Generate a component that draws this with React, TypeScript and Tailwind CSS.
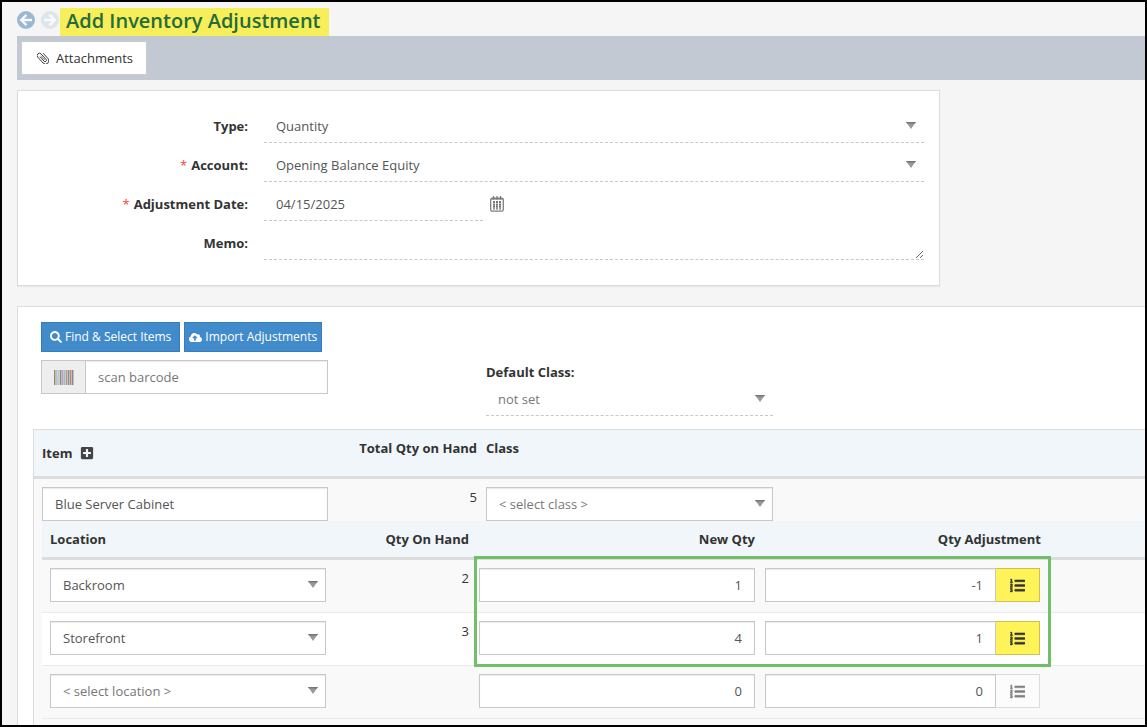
import React, { useState } from 'react';
import { FaCloudUploadAlt, FaListOl, FaPlusSquare, FaSearch } from 'react-icons/fa';

const fieldClass =
  'h-[34px] w-full appearance-none rounded-none border border-[#c8c8c8] bg-white px-3 text-[#555] shadow-[inset_0_1px_1px_rgba(0,0,0,0.08)] outline-none';
const lineClass =
  'block h-[34px] w-full appearance-none rounded-none border-b border-dashed border-[#c8c8c8] bg-transparent px-3 text-[#555] outline-none';

interface LocationRow {
  location: string;
  onHand: string;
  newQty: string;
  adjustment: string;
}

const initialRows: LocationRow[] = [
  { location: 'Backroom', onHand: '2', newQty: '1', adjustment: '-1' },
  { location: 'Storefront', onHand: '3', newQty: '4', adjustment: '1' },
  { location: '', onHand: '', newQty: '0', adjustment: '0' },
];

const CircleArrow: React.FC<{ forward?: boolean }> = ({ forward }) => (
  <svg viewBox="0 0 18 18" className="size-[18px]" aria-hidden="true">
    <circle cx="9" cy="9" r="9" fill={forward ? '#dfe6eb' : '#9bb8d3'} />
    <g transform={forward ? 'rotate(180 9 9)' : undefined} fill="none" stroke="#f8fafc" strokeWidth="2.4">
      <path d="M9.4 3.8 4.3 9l5.1 5.2" />
      <path d="M4.6 9H15" />
    </g>
  </svg>
);

const PaperclipIcon = () => (
  <svg viewBox="0 0 12 12" className="size-3" fill="none" stroke="#333" strokeWidth="0.9" aria-hidden="true">
    <g transform="rotate(-42 6 6)">
      <path d="M4.700 3v6.200a1.300 1.300 0 0 0 2.600 0V1.800a2.300 2.300 0 0 0-4.600 0v8a3.300 3.300 0 0 0 6.600 0V2.600" />
      <path d="M6 3v6" strokeWidth="0.500" />
    </g>
  </svg>
);

const CalendarIcon = () => (
  <svg viewBox="0 0 14 16" className="h-4 w-3.5" aria-hidden="true">
    <rect x="0.7" y="2.200" width="12.600" height="13" rx="1.600" fill="#fff" stroke="#808080" strokeWidth="1.300" />
    <path d="M1 2.800h12" stroke="#808080" strokeWidth="1.600" />
    <path d="M3.500 0v3.500M7 0v3.500M10.500 0v3.500" stroke="#777" strokeWidth="1.200" />
    <path d="M4 5v8.600M7 5v8.600M10 5v8.600" stroke="#777" strokeWidth="2" strokeDasharray="2 0.400" />
  </svg>
);

const barcodeBars = ['#8f8a72', '#c3b5dd', '#a9d6b8', '#8e8890', '#b79fd0', '#8fc5c4', '#c2908f', '#8f8f86', '#b08a72', '#8a86a0'];

const BarcodeIcon = () => (
  <svg viewBox="0 0 20 15" className="h-[15px] w-5" aria-hidden="true">
    <rect width="20" height="15" fill="#d9d4cc" />
    {barcodeBars.map((color, i) => (
      <rect key={color} x={i * 2} width="1.300" height="15" fill={color} />
    ))}
  </svg>
);

interface SelectProps {
  id?: string;
  label?: string;
  options: string[];
  className: string;
}

const Select: React.FC<SelectProps> = ({ id, label, options, className }) => (
  <div className="relative w-full">
    <select id={id} aria-label={label} className={className}>
      {options.map((option) => (
        <option key={option}>{option}</option>
      ))}
    </select>
    <svg
      viewBox="0 0 10 7"
      className="pointer-events-none absolute right-2 top-[13px] h-[7px] w-2.5"
      aria-hidden="true"
    >
      <path d="M0 0h10L5 7z" fill="#999" />
      <path d="M0 0h10L9 1.500H1z" fill="#777" />
    </svg>
  </div>
);

interface FormRowProps {
  id: string;
  label: string;
  required?: boolean;
  children: React.ReactNode;
}

const FormRow: React.FC<FormRowProps> = ({ id, label, required, children }) => (
  <div className="flex items-center gap-4">
    <label htmlFor={id} className="w-[230px] shrink-0 text-right font-bold text-[#333]">
      {required && <span className="mr-1 font-normal text-[#f44336]">*</span>}
      {label}
    </label>
    <div className="flex flex-1 items-center">{children}</div>
  </div>
);

const LocationTable = () => {
  const [rows, setRows] = useState(initialRows);

  const update = (index: number, key: 'newQty' | 'adjustment', value: string) => {
    setRows(rows.map((row, i) => (i === index ? { ...row, [key]: value } : row)));
  };

  return (
    <div className="relative">
      <table className="w-full table-fixed border-collapse">
        <colgroup>
          <col className="w-[289px]" />
          <col className="w-[143px]" />
          <col className="w-[286px]" />
          <col className="w-[286px]" />
          <col />
        </colgroup>
        <thead>
          <tr className="h-[39px] bg-[#f0f6f9] align-top text-[#333] shadow-[inset_0_-3px_#dcdcdc]">
            <th className="pl-2 pt-2 text-left">Location</th>
            <th className="px-[5px] pt-2 text-right">Qty On Hand</th>
            <th className="px-[5px] pt-2 text-right">New Qty</th>
            <th className="px-[5px] pt-2 text-right">Qty Adjustment</th>
            <td />
          </tr>
        </thead>
        <tbody>
          {rows.map((row, i) => (
            <tr
              key={i}
              className="h-[53px] bg-[#f9f9f9] align-top shadow-[inset_0_-1px_#eaeaea] even:bg-white"
            >
              <td className="pl-2 pr-[5px] pt-2">
                <Select
                  label="Location"
                  options={row.location ? [row.location] : ['< select location >']}
                  className={`${fieldClass} ${row.location ? '' : 'text-[#777]'}`}
                />
              </td>
              <td className="px-[5px] pt-2 text-right">{row.onHand}</td>
              <td className="px-[5px] pt-2">
                <input
                  aria-label="New Qty"
                  className={`${fieldClass} text-right`}
                  value={row.newQty}
                  onChange={(e) => update(i, 'newQty', e.target.value)}
                />
              </td>
              <td className="pl-[5px] pr-1.5 pt-2">
                <div className="flex">
                  <input
                    aria-label="Qty Adjustment"
                    className={`${fieldClass} min-w-0 flex-1 text-right`}
                    value={row.adjustment}
                    onChange={(e) => update(i, 'adjustment', e.target.value)}
                  />
                  <button
                    aria-label="Serial numbers"
                    className={
                      row.location
                        ? 'flex h-[34px] w-11 items-center justify-center border border-l-0 border-[#cfc24a] bg-[#fff35a] text-[#333]'
                        : 'flex h-[34px] w-11 items-center justify-center border border-l-0 border-[#dcdcdc] bg-[#fcfcfc] text-[#808080]'
                    }
                  >
                    <FaListOl className="size-[15px]" stroke="currentColor" strokeWidth={16} />
                  </button>
                </div>
              </td>
              <td />
            </tr>
          ))}
        </tbody>
      </table>
      <div className="pointer-events-none absolute left-[432px] top-[35px] h-[111px] w-[577px] border-[3px] border-[#72bf6a]" />
    </div>
  );
};

const App = () => {
  return (
    <div className="h-screen overflow-hidden border-2 border-black bg-[#f5f5f5] pl-[15px] pt-1.5 font-['Open_Sans',sans-serif] text-[13px] leading-5 text-[#333]">
      <header className="flex items-start">
        <button aria-label="Back" className="mt-[3px]">
          <CircleArrow />
        </button>
        <button aria-label="Forward" className="ml-1.5 mt-[3px]">
          <CircleArrow forward />
        </button>
        <h1 className="ml-px bg-[#f7ef59] pb-0.5 pl-1.5 pr-2 text-[20px] font-semibold leading-[26px] text-[#256b3c]">
          Add Inventory Adjustment
        </h1>
      </header>

      <nav className="flex h-11 items-center bg-[#c2c9d2] px-1">
        <button className="flex h-[34px] items-center gap-[7px] border border-[#ccc] bg-white pl-[15px] pr-[13px]">
          <PaperclipIcon />
          Attachments
        </button>
      </nav>

      <form className="mt-2.5 flex max-w-[923px] flex-col gap-[5px] border border-[#dcdcdc] bg-white pb-[25px] pr-[15px] pt-[18px] shadow-[0_1px_1px_rgba(0,0,0,0.05)]">
        <FormRow id="type" label="Type:">
          <Select id="type" options={['Quantity']} className={lineClass} />
        </FormRow>
        <FormRow id="account" label="Account:" required>
          <Select id="account" options={['Opening Balance Equity']} className={lineClass} />
        </FormRow>
        <FormRow id="date" label="Adjustment Date:" required>
          <div className="w-[219px]">
            <input id="date" className={lineClass} defaultValue="04/15/2025" />
          </div>
          <button type="button" aria-label="Pick a date" className="ml-[7px]">
            <CalendarIcon />
          </button>
        </FormRow>
        <FormRow id="memo" label="Memo:">
          <textarea id="memo" className={`${lineClass} py-1.5`} />
        </FormRow>
      </form>

      <section className="mt-5 border-l border-t border-[#dcdcdc] bg-white pl-[15px] pt-[15px]">
        <div className="mb-[13px] flex pl-2">
          <div className="w-[445px]">
            <div className="flex gap-1 text-[12px] text-white">
              <button className="flex h-[30px] items-center gap-[3px] border border-[#357ebd] bg-[#428bca] px-2">
                <FaSearch className="size-3" />
                Find &amp; Select Items
              </button>
              <button className="flex h-[30px] items-center gap-[3px] border border-[#357ebd] bg-[#428bca] px-1">
                <FaCloudUploadAlt className="size-[13px]" />
                Import Adjustments
              </button>
            </div>
            <div className="mt-2 flex w-[287px]">
              <span className="flex h-[34px] w-11 items-center justify-center border border-r-0 border-[#c8c8c8] bg-[#eee]">
                <BarcodeIcon />
              </span>
              <input
                aria-label="Scan barcode"
                placeholder="scan barcode"
                className={`${fieldClass} min-w-0 flex-1 placeholder:text-[#777]`}
              />
            </div>
          </div>
          <div className="w-[287px] pt-10">
            <label htmlFor="default-class" className="block font-bold">
              Default Class:
            </label>
            <Select id="default-class" options={['not set']} className={`${lineClass} text-[#777]`} />
          </div>
        </div>

        <div className="border-l border-t border-[#dcdcdc] bg-[#f9f9f9] pb-6">
          <table className="w-full table-fixed border-collapse">
            <colgroup>
              <col className="w-[299px]" />
              <col className="w-[149px]" />
              <col className="w-[296px]" />
              <col />
            </colgroup>
            <thead>
              <tr className="h-[49px] bg-[#f0f6f9] align-top shadow-[inset_0_-3px_#dcdcdc]">
                <th className="pb-[3px] pl-2 text-left align-middle">
                  <span className="flex items-center gap-2">
                    Item
                    <button aria-label="Add item">
                      <FaPlusSquare className="size-[14px] text-[#444]" />
                    </button>
                  </span>
                </th>
                <th className="pr-[5px] pt-2 text-right">Total Qty on Hand</th>
                <th className="pl-1 pt-2 text-left">Class</th>
                <td />
              </tr>
            </thead>
            <tbody>
              <tr className="align-top">
                <td className="pl-2 pr-[5px] pt-2">
                  <input aria-label="Item" className={`${fieldClass} block`} defaultValue="Blue Server Cabinet" />
                </td>
                <td className="pr-[5px] pt-2 text-right">5</td>
                <td className="pl-1 pr-[5px] pt-2">
                  <Select label="Class" options={['< select class >']} className={`${fieldClass} block text-[#777]`} />
                </td>
                <td />
              </tr>
              <tr>
                <td colSpan={4} className="pl-2">
                  <LocationTable />
                </td>
              </tr>
            </tbody>
          </table>
        </div>
      </section>
    </div>
  );
};

export default App;
